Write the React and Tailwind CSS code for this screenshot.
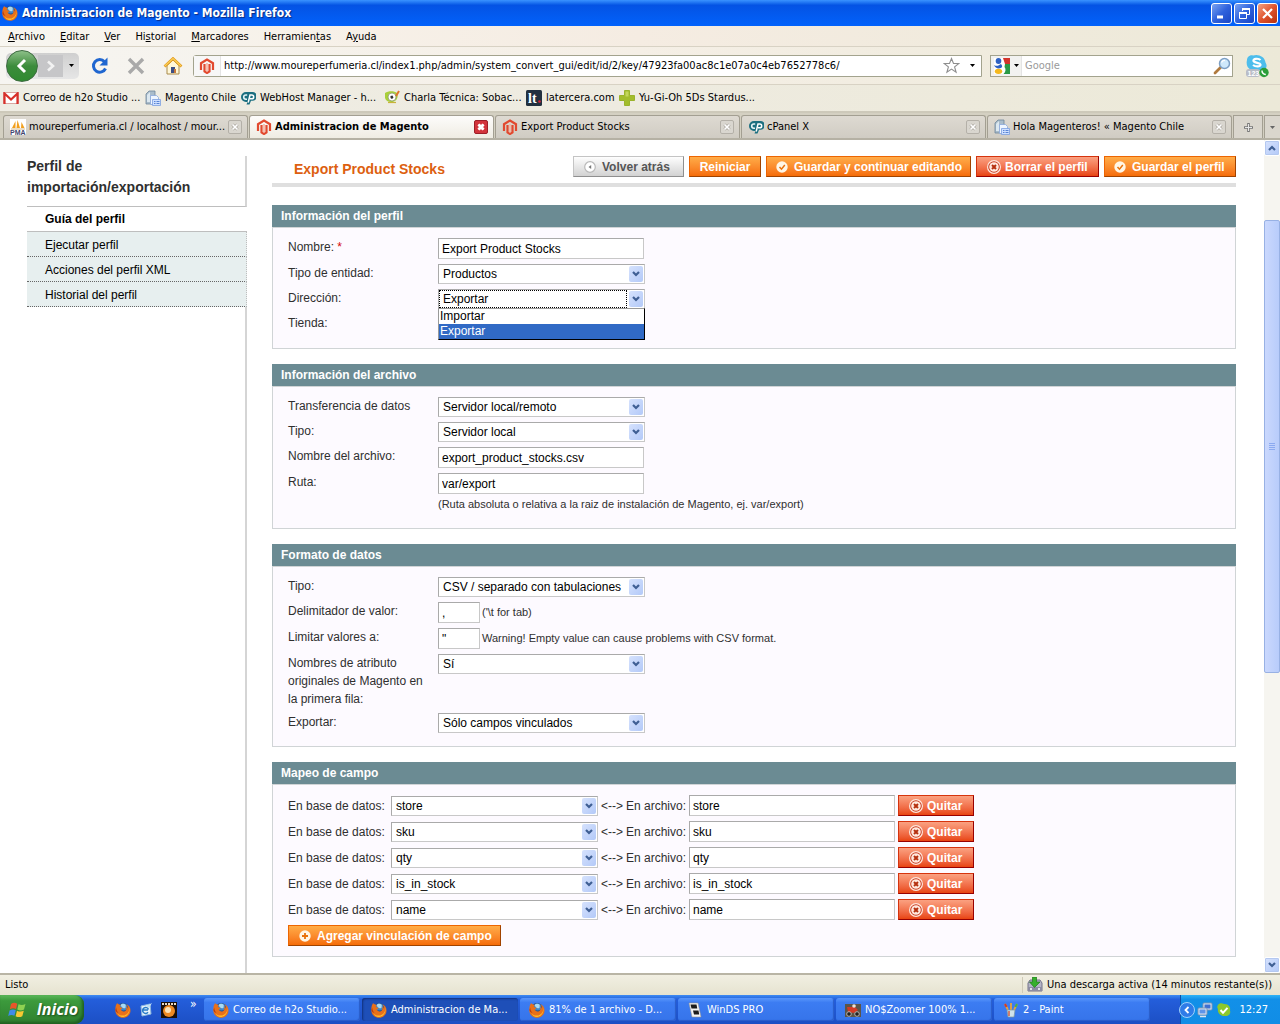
import React from "react";

const UI = "font-['DejaVu_Sans_Condensed','DejaVu_Sans',sans-serif]";

/* ---------- Icons ---------- */

function Firefox({ className = "size-4" }) {
  return (
    <svg viewBox="0 0 16 16" className={className} aria-hidden="true">
      <circle cx="8" cy="7.2" r="6.2" fill="#23508f" />
      <circle cx="8.500" cy="5" r="3.6" fill="#3f86c8" />
      <path d="M5.5 3.2c1.5-1.800 3.800-1.800 5.300-.2-.4 1.300.3 2.300-.6 3.200-1.300.3-2.600-.2-3.300-1z" fill="#a8daf2" />
      <path d="M1 3c.6-.7.9-1.200 1-2 .6.8 1.300 1.300 2.400 1.500C6 2.600 5.600 4 4.800 5c.9.5 1.900.5 2.700.7-.2.9-1.200 1.300-1.800 1.900.8 1.800 2.800 2.300 4.600 1.300 1.400-.9 1.400-3 .6-4.500 1.300.6 1.800 1.500 2 2.400.1-2-.5-3.700-1.800-4.900 3 1.200 4.700 3.800 4.400 7-.3 3.900-3.400 6.800-7.300 6.900C3.700 15.900.3 12.600.3 8.300.3 6.200.5 4.600 1 3z" fill="#e8701a" />
      <path d="M14.200 5c.8 4.500-2 8.500-6.200 8.600-3 .1-5-1.300-6-3.400 1 3.200 3.500 4.900 6.400 4.700 3.900-.3 7.200-4.500 5.800-9.900z" fill="#fcc02c" />
      <path d="M1.200 5.500c0 2 .7 4 2.300 5.200-1.800-.4-2.700-1.500-3-2.800z" fill="#b23410" />
    </svg>
  );
}

function Magento({ className = "size-4" }) {
  return (
    <svg viewBox="0 0 16 16" className={className} fill="none" stroke="#e2492f" aria-hidden="true">
      <path d="M2 12V5.200L8 1.500l6 3.700V12" strokeWidth="2.200" />
      <path d="M5.500 6v7.300L8 15l2.500-1.700V6" strokeWidth="2.200" />
      <path d="M8 5v8.500" stroke="#f7b3a2" strokeWidth="1.600" />
    </svg>
  );
}

function PageStack({ className = "size-4" }) {
  return (
    <svg viewBox="0 0 16 16" className={className} aria-hidden="true">
      <path d="M1 4l3-3h6v13H1z" fill="#a9bccb" stroke="#6f8799" strokeWidth=".8" />
      <path d="M2 5l3-3v10H2z" fill="#dce8f0" />
      <path d="M5.500 5.500h6l2 2v7h-8z" fill="#eef5ff" stroke="#8aa8dc" strokeWidth=".8" />
      <path d="M7.500 9.500h8v6h-8z" fill="#cfe0ff" stroke="#7c9fe0" strokeWidth=".8" />
      <path d="M9 11.500h1.500M11.500 11.500h3M9 13.500h1.500M11.500 13.500h3" stroke="#4d7bd0" strokeWidth=".9" />
    </svg>
  );
}

function CPanel({ className = "size-4" }) {
  return (
    <svg viewBox="0 0 16 16" className={className} aria-hidden="true">
      <path d="M6 2h6.500a3.800 3.800 0 0 1 0 8.800H11l-1.500 3.700H6.500L7.500 12H6A5 5 0 0 1 6 2z" fill="#1c6f80" />
      <path d="M7.200 5H5.800a2 2 0 0 0 0 4.200H7" fill="none" stroke="#e6f4f6" strokeWidth="1.600" />
      <path d="M8.200 12.500L10 5h1.800a1.900 1.900 0 0 1 0 3.800H10" fill="none" stroke="#fff" strokeWidth="1.500" />
    </svg>
  );
}

function Gmail() {
  return (
    <svg viewBox="0 0 16 12" className="h-3 w-4" aria-hidden="true">
      <path d="M.5.500h15v11H.5z" fill="#fff" stroke="#d9a5a0" />
      <path d="M1.500 12V1.500L8 7.500l6.500-6V12" fill="none" stroke="#d8302a" strokeWidth="2.200" />
    </svg>
  );
}

function Charla() {
  return (
    <svg viewBox="0 0 16 16" className="size-4" aria-hidden="true">
      <path d="M1 3c3-2 9-2.500 12 0 1.500 3 .5 7-3 8.500-4 1.500-8 0-9-3.500z" fill="#a9cf3a" />
      <circle cx="8" cy="7" r="4" fill="#fff" stroke="#8c9c6c" strokeWidth=".8" />
      <path d="M6.500 6l2-.5 1 2L8 9 6.500 8z" fill="#333" />
      <path d="M15 1l-3 5" stroke="#e0752a" strokeWidth="2" />
      <path d="M4 12.500h8" stroke="#c9b23a" strokeWidth="1.200" />
    </svg>
  );
}

function LaTercera() {
  return (
    <svg viewBox="0 0 16 16" className="size-4" aria-hidden="true">
      <rect width="16" height="16" rx="1.500" fill="#22303f" />
      <text x="2" y="12.500" fontSize="14" fontWeight="700" fill="#fff" fontFamily="Liberation Serif, serif">lt</text>
      <circle cx="13.500" cy="11.500" r="1.300" fill="#d8203a" />
    </svg>
  );
}

function GreenPlus() {
  return (
    <svg viewBox="0 0 16 16" className="size-4" aria-hidden="true">
      <path d="M5.500.5h5v5h5v5h-5v5h-5v-5h-5v-5h5z" fill="#a3bd2c" stroke="#9ab32c" />
      <path d="M6.500 1.500h3v5h-3z" fill="#c3d65a" />
    </svg>
  );
}

function Pma() {
  return (
    <svg viewBox="0 0 16 16" className="size-4" aria-hidden="true">
      <rect width="16" height="16" fill="#fff" />
      <path d="M2 9L5.500 2v7zM6.500 9l1-8 2.500 8zM11 9l.5-6 3 6z" fill="#f2a01e" />
      <path d="M1 10h14" stroke="#c9a66a" strokeWidth=".8" />
      <text x="0" y="16" fontSize="7" fontWeight="700" fill="#3f456e" fontFamily="Liberation Sans, sans-serif">PMA</text>
    </svg>
  );
}

function Google() {
  return (
    <svg viewBox="0 0 16 16" className="size-4" aria-hidden="true">
      <rect width="16" height="16" fill="#fff" />
      <path d="M9 0h7v6h-5z" fill="#d3352c" />
      <path d="M11 6h5v10H9.500c2.500-2.500 2.500-5 1-7z" fill="#2b9a46" />
      <ellipse cx="4.500" cy="3" rx="2.800" ry="3" fill="#2f62c4" />
      <path d="M0 7c3 2 5 0 7-1 1 1 2 3 0 4-3 1-6 0-7-3z" fill="#2f62c4" />
      <ellipse cx="4.500" cy="13.300" rx="3.700" ry="2.600" fill="#f4b81e" />
    </svg>
  );
}

function Magnifier() {
  return (
    <svg viewBox="0 0 18 18" className="size-[18px]" aria-hidden="true">
      <path d="M2 16l6-6" stroke="#b07a3e" strokeWidth="2.800" strokeLinecap="round" />
      <circle cx="11.500" cy="6.500" r="5" fill="#cfe8fb" stroke="#7d9fc4" strokeWidth="1.500" />
      <path d="M8.500 5.500c.6-1.500 2-2.300 3.500-2" fill="none" stroke="#fff" strokeWidth="1.300" />
    </svg>
  );
}

function Skype() {
  return (
    <svg viewBox="0 0 24 24" className="size-6" aria-hidden="true">
      <path d="M2 6C2 3 5 .5 8 1.500c5-2 12 1 12.500 7 2 3 1 6-1 7.500H6C2 14 1 10 2 6z" fill="#4dbdec" />
      <path d="M15.500 6c-2-2-8-1.500-7 1 .8 2.200 6.500 1.500 7 3.500.3 2.500-5 2.500-7.500.5" fill="none" stroke="#fff" strokeWidth="2.200" />
      <rect x="1" y="15" width="14" height="8" rx="3" fill="#b9bcc6" />
      <text x="2.500" y="21.500" fontSize="7" fill="#fff" fontWeight="700" fontFamily="Liberation Sans, sans-serif">123</text>
      <circle cx="19" cy="18.500" r="4.700" fill="#2c9e3a" />
      <path d="M17 16.500c0 2 1.500 3.800 3.800 4" fill="none" stroke="#fff" strokeWidth="1.500" />
    </svg>
  );
}

function Home() {
  return (
    <svg viewBox="0 0 20 18" className="h-[18px] w-5" aria-hidden="true">
      <path d="M4 8.500V17h12V8.500L10 3z" fill="#fff7d8" stroke="#a98b4a" />
      <path d="M1.500 9.500L10 1.500l8.500 8" fill="none" stroke="#e39a1c" strokeWidth="2.600" />
      <path d="M1.800 9L10 1.500l8 7.500" fill="none" stroke="#fbd15a" strokeWidth="1.100" />
      <path d="M8 16v-6h4v6z" fill="#3c4f86" />
      <path d="M11 12h2v4h-2z" fill="#c7783a" />
    </svg>
  );
}

function DownArrow() {
  return (
    <svg viewBox="0 0 5 3" width="5" height="3" aria-hidden="true">
      <path d="M0 0h5L2.500 3z" fill="currentColor" />
    </svg>
  );
}

function Chevron({ up = false }) {
  return (
    <svg viewBox="0 0 8 6" width="8" height="6" aria-hidden="true">
      <path d={up ? "M1 5l3-3 3 3" : "M1 1l3 3 3-3"} fill="none" stroke="#3f5f94" strokeWidth="2.200" />
    </svg>
  );
}

function CloseMark({ active }) {
  return (
    <svg viewBox="0 0 14 14" className="size-3.5" aria-hidden="true">
      <rect x=".5" y=".5" width="13" height="13" rx="1.500" fill={active ? "#d2343c" : "#d9d6cf"} stroke={active ? "#9c1f28" : "#b4b0a8"} />
      <path d="M4.500 4.500l5 5M9.500 4.500l-5 5" stroke={active ? "#fff" : "#a8a49c"} strokeWidth="3" />
      <path d="M4.500 4.500l5 5M9.500 4.500l-5 5" stroke="#fff" strokeWidth="1.700" />
    </svg>
  );
}

function BadgeIcon({ kind }) {
  if (kind === "x")
    return (
      <svg viewBox="0 0 14 14" className="size-3.5" aria-hidden="true">
        <circle cx="7" cy="7" r="6.400" fill="#c8381a" stroke="#ffe9df" strokeWidth="1.200" />
        <circle cx="7" cy="7" r="4.800" fill="#ffe9df" />
        <path d="M5 5l4 4M9 5L5 9" stroke="#b5300f" strokeWidth="2" />
      </svg>
    );
  if (kind === "back")
    return (
      <svg viewBox="0 0 12 12" className="size-3" aria-hidden="true">
        <circle cx="6" cy="6" r="5.300" fill="#fff" stroke="#b9b9b9" strokeWidth="1.200" />
        <path d="M7.200 4v4L4.500 6z" fill="#777" />
      </svg>
    );
  return (
    <svg viewBox="0 0 12 12" className="size-3" aria-hidden="true">
      <circle cx="6" cy="6" r="5.700" fill="#fff6e6" />
      {kind === "plus" ? (
        <path d="M6 3v6M3 6h6" stroke="#e8720c" strokeWidth="1.800" />
      ) : (
        <path d="M3.500 6l2 2.200L8.800 4" fill="none" stroke="#e8720c" strokeWidth="1.500" />
      )}
    </svg>
  );
}

/* ---------- Window chrome ---------- */

function TitleBar() {
  const base = "flex size-[21px] items-center justify-center rounded-[3px] border border-white";
  const blue = "bg-linear-to-br from-[#7ba2f0] via-[#2f62dd] to-[#1a45c4]";
  return (
    <header className="flex h-[26px] items-center bg-linear-to-b from-[#3a93ff] via-[#0453e4] via-20% to-[#0262fb] px-0.5">
      <Firefox />
      <h1 className="ml-1 flex-1 text-[12px] font-bold text-white [text-shadow:1px_1px_1px_#0a2a80]">
        Administracion de Magento - Mozilla Firefox
      </h1>
      <div className="flex gap-0.5">
        <button aria-label="Minimizar" className={`${base} ${blue}`}>
          <svg viewBox="0 0 13 13" width="13" height="13"><path d="M2 10h6" stroke="#fff" strokeWidth="3" /></svg>
        </button>
        <button aria-label="Restaurar" className={`${base} ${blue}`}>
          <svg viewBox="0 0 13 13" width="13" height="13" fill="none" stroke="#fff">
            <path d="M4.500 4V1.500h7v6H9" /><path d="M4 2h8" strokeWidth="2" />
            <path d="M1.500 5.500h7v6h-7z" /><path d="M1 6h8" strokeWidth="2" />
          </svg>
        </button>
        <button aria-label="Cerrar" className={`${base} bg-linear-to-br from-[#f0a080] via-[#e0532c] to-[#b8300c]`}>
          <svg viewBox="0 0 13 13" width="13" height="13"><path d="M2 2l9 9M11 2l-9 9" stroke="#fff" strokeWidth="2.200" /></svg>
        </button>
      </div>
    </header>
  );
}

const MENUS = [
  ["", "A", "rchivo"],
  ["", "E", "ditar"],
  ["", "V", "er"],
  ["Hi", "s", "torial"],
  ["", "M", "arcadores"],
  ["Herramien", "t", "as"],
  ["A", "y", "uda"],
];

function MenuBar() {
  return (
    <nav className="flex h-[21px] items-center gap-[15px] border-b border-[#d8d2c4] bg-linear-to-r from-[#f8f6f0] via-[#f5ece2] to-[#ece9d8] pt-0.5 pl-2">
      {MENUS.map(([a, b, c]) => (
        <button key={a + b + c}>
          {a}
          <span className="underline">{b}</span>
          {c}
        </button>
      ))}
    </nav>
  );
}

function NavBar() {
  return (
    <div className="flex h-[38px] items-center border-b border-[#d8d2c4] bg-linear-to-r from-[#f6f5f1] via-[#f5efe6] to-[#ece9d8] pr-2 pl-1.5">
      <div className="flex h-[26px] w-[73px] items-center rounded-[5px] bg-linear-to-b from-[#cfcfcf] to-[#e6e6e6]">
        <button aria-label="Atrás" className="flex size-8 shrink-0 items-center justify-center rounded-full border border-[#3d6b40] bg-linear-to-b from-[#8cc088] via-[#3c8c3c] to-[#2f8a30]">
          <svg viewBox="0 0 14 16" width="14" height="16"><path d="M10 2L4 8l6 6" fill="none" stroke="#fff" strokeWidth="3" /></svg>
        </button>
        <button aria-label="Adelante" className="flex h-[22px] w-[25px] items-center justify-center bg-[#c6c6c8]">
          <svg viewBox="0 0 10 12" width="10" height="12"><path d="M2 1.500L7 6l-5 4.500" fill="none" stroke="#f2f2f2" strokeWidth="2.600" /></svg>
        </button>
        <button aria-label="Historial reciente" className="flex flex-1 items-center justify-center">
          <DownArrow />
        </button>
      </div>
      <button aria-label="Recargar" className="ml-3">
        <svg viewBox="0 0 18 18" width="18" height="18">
          <path d="M14.500 11.500a6.300 6.300 0 1 1-1-6.800" fill="none" stroke="#1f66d0" strokeWidth="3" />
          <path d="M16.500.500v8h-8z" fill="#1f66d0" />
        </svg>
      </button>
      <button aria-label="Detener" className="ml-[18px]">
        <svg viewBox="0 0 18 18" width="18" height="18"><path d="M2 2l14 14M16 2L2 16" stroke="#a9a9a9" strokeWidth="3.400" /></svg>
      </button>
      <button aria-label="Inicio" className="ml-[18px]"><Home /></button>
      <div className="ml-2.5 flex h-[22px] flex-1 items-center rounded-l-[3px] border border-[#a3a38e] bg-white">
        <span className="flex h-full w-[27px] items-center justify-center border-r border-[#e4e4e4] bg-[#f7f7f7]"><Magento /></span>
        <input
          aria-label="Dirección"
          className="min-w-0 flex-1 px-[3px] outline-none"
          defaultValue="http://www.moureperfumeria.cl/index1.php/admin/system_convert_gui/edit/id/2/key/47923fa00ac8c1e07a0c4eb7652778c6/"
        />
        <button aria-label="Añadir a marcadores">
          <svg viewBox="0 0 17 17" width="17" height="17"><path d="M8.500 1.500l2 5h5.300l-4.200 3.400 1.500 5.400-4.600-3.200-4.600 3.200 1.500-5.400L1.200 6.500h5.300z" fill="#fff" stroke="#8e8e8e" strokeWidth="1.100" /></svg>
        </button>
        <button aria-label="Direcciones recientes" className="flex w-[21px] justify-center pl-1"><DownArrow /></button>
      </div>
      <div className="ml-2 flex h-[22px] w-[243px] items-center border border-[#a3a38e] bg-white">
        <button aria-label="Motor de búsqueda" className="flex h-full w-[31px] items-center gap-1 border-r border-[#e4e4e4] bg-[#f2f2f0] pl-[3px]">
          <Google /><DownArrow />
        </button>
        <input aria-label="Buscar" placeholder="Google" className="min-w-0 flex-1 px-[3px] outline-none placeholder:text-[#9a9a9a]" />
        <button aria-label="Ir" className="mr-px"><Magnifier /></button>
      </div>
      <button aria-label="Skype" className="ml-3 mr-[3px]"><Skype /></button>
    </div>
  );
}

const BOOKMARKS = [
  { icon: <Gmail />, text: "Correo de h2o Studio ...", w: "w-[142px]" },
  { icon: <PageStack />, text: "Magento Chile", w: "w-[95px]" },
  { icon: <CPanel />, text: "WebHost Manager - h...", w: "w-[144px]" },
  { icon: <Charla />, text: "Charla Técnica: Sobac...", w: "w-[142px]" },
  { icon: <LaTercera />, text: "latercera.com", w: "w-[93px]" },
  { icon: <GreenPlus />, text: "Yu-Gi-Oh 5Ds Stardus...", w: "w-[142px]" },
];

function BookmarksBar() {
  return (
    <nav className="flex h-[26px] items-center bg-linear-to-r from-[#efede4] via-[#eeebe0] to-[#ece9d8] pl-[3px]">
      {BOOKMARKS.map((b) => (
        <a key={b.text} href="#" className={`flex items-center gap-1 whitespace-nowrap ${b.w}`}>
          <span className="shrink-0">{b.icon}</span>
          {b.text}
        </a>
      ))}
    </nav>
  );
}

const TABS = [
  { icon: <Pma />, text: "moureperfumeria.cl / localhost / mour..." },
  { icon: <Magento />, text: "Administracion de Magento", active: true },
  { icon: <Magento />, text: "Export Product Stocks" },
  { icon: <CPanel />, text: "cPanel X" },
  { icon: <PageStack />, text: "Hola Magenteros! « Magento Chile" },
];

function TabStrip() {
  return (
    <div className="flex h-[29px] items-stretch border-t-2 border-b-2 border-t-[#cdc9ba] border-b-[#b5b1a4] bg-[#d4d0c2] pt-0.5 pl-[3px]">
      {TABS.map((t) => (
        <div
          key={t.text}
          className={`mr-px flex min-w-0 flex-1 items-center rounded-t-[3px] border border-b-0 border-[#a39f92] pr-[5px] pl-1.5 ${
            t.active ? "bg-linear-to-b from-[#fdfcfb] to-[#efece3] font-bold" : "bg-linear-to-b from-[#dedad2] to-[#d0ccc3]"
          }`}
        >
          <button className="flex min-w-0 flex-1 items-center gap-[3px] whitespace-nowrap">
            <span className="shrink-0">{t.icon}</span>
            <span>{t.text}</span>
          </button>
          <button aria-label="Cerrar pestaña"><CloseMark active={t.active} /></button>
        </div>
      ))}
      <button aria-label="Nueva pestaña" className="mr-px flex w-[30px] items-center justify-center border border-b-0 border-[#a39f92] bg-[#dad6cd]">
        <svg viewBox="0 0 9 9" width="9" height="9"><path d="M4.500 0v9M0 4.500h9" stroke="#777" strokeWidth="2.600" /><path d="M4.500 1v7M1 4.500h7" stroke="#e6e6e6" strokeWidth="1" /></svg>
      </button>
      <button aria-label="Lista de pestañas" className="flex w-4 items-center justify-center border border-r-0 border-b-0 border-[#a39f92] bg-[#dad6cd] text-[#666]"><DownArrow /></button>
    </div>
  );
}

/* ---------- Magento page ---------- */

const BTN = "flex h-[21px] items-center border text-[12px] leading-none font-bold whitespace-nowrap";
const ORANGE = "gap-1.5 border-[#ed6502] border-r-[#a04300] border-b-[#a04300] bg-linear-to-b from-[#ffac47] to-[#f56c06] text-white";
const RED = "gap-1 border-[#d6340e] border-r-[#990000] border-b-[#990000] bg-linear-to-b from-[#faa181] to-[#e8430c] text-white";
const GREY = "gap-1.5 border-[#c4c4c4] border-r-[#8f8f8f] border-b-[#8f8f8f] bg-linear-to-b from-[#fefefe] to-[#d2d2d2] text-[#555]";

function Sidebar() {
  return (
    <aside className="mt-4 ml-[27px] flex w-[220px] shrink-0 flex-col">
      <h2 className="h-[51px] border-r-2 border-b border-r-[#d5d5d5] border-b-[#bebebe] text-[14px] leading-[21px] font-bold text-[#2f3030]">
        Perfil de importación/exportación
      </h2>
      <ul className="text-[12px] leading-6 text-black">
        <li className="border-b border-[#bebebe] pl-[18px] font-bold"><a href="#">Guía del perfil</a></li>
        {["Ejecutar perfil", "Acciones del perfil XML", "Historial del perfil"].map((t) => (
          <li key={t} className="border-r border-b border-dotted border-r-[#bebebe] border-b-[#666] bg-[#e7efef] pt-0.5 pl-[18px] leading-[22px]">
            <a href="#">{t}</a>
          </li>
        ))}
      </ul>
      <div className="flex-1 border-r-2 border-[#d5d5d5]" />
    </aside>
  );
}

function PageHeader() {
  return (
    <div className="flex h-[31px] items-start gap-[5px] border-b-4 border-[#dfdfdf]">
      <h3 className="flex-1 pt-[3px] pl-[22px] text-[14px] leading-[21px] font-bold text-[#dd5f10]">Export Product Stocks</h3>
      <button className={`${BTN} ${GREY} w-[111px] pl-2.5`}><BadgeIcon kind="back" />Volver atrás</button>
      <button className={`${BTN} ${ORANGE} w-[72px] justify-center`}>Reiniciar</button>
      <button className={`${BTN} ${ORANGE} w-[205px] pl-[9px]`}><BadgeIcon kind="check" />Guardar y continuar editando</button>
      <button className={`${BTN} ${RED} w-[123px] pl-2.5`}><BadgeIcon kind="x" />Borrar el perfil</button>
      <button className={`${BTN} ${ORANGE} w-[132px] pl-[9px]`}><BadgeIcon kind="check" />Guardar el perfil</button>
    </div>
  );
}

function Section({ title, className = "pb-[13px]", children }) {
  return (
    <section>
      <h4 className="h-[22px] bg-[#6b8b93] pl-[9px] text-[12px] leading-[22px] font-bold text-white">{title}</h4>
      <div className={`flex flex-col gap-[5px] border border-[#d0d4d6] bg-[#fdfaff] px-[15px] pt-2.5 ${className}`}>{children}</div>
    </section>
  );
}

function Row({ id, label, required, note, children }) {
  return (
    <div className="flex items-start">
      <label htmlFor={id} className="w-[150px] shrink-0 pr-2 leading-[18px]">
        {label}
        {required && <span className="text-[#d40707]"> *</span>}
      </label>
      {children}
      {note && <span className="ml-0.5 text-[11px] leading-5">{note}</span>}
    </div>
  );
}

const BOX = "border border-[#c8c8c8] border-t-[#aaa] border-l-[#aaa] bg-white text-[12px] text-black";

function TextBox({ id, value, w = "w-[206px]" }) {
  return <input id={id} defaultValue={value} className={`block h-[21px] px-[3px] outline-none ${BOX} ${w}`} />;
}

function Select({ id, value, options, open }) {
  return (
    <div className="relative w-[207px] shrink-0">
      <select id={id} defaultValue={value} className={`block h-5 w-full appearance-none pl-1 outline-none ${BOX}`}>
        {(options || [value]).map((o) => (
          <option key={o}>{o}</option>
        ))}
      </select>
      {open && <span className="pointer-events-none absolute inset-y-px left-px w-[188px] border border-dotted border-black" />}
      <span className="pointer-events-none absolute top-0.5 right-0.5 flex h-4 w-[14px] items-center justify-center rounded-[2px] bg-linear-to-br from-[#d6e2fd] to-[#b3c9f8]">
        <Chevron />
      </span>
      {open && (
        <ul className="absolute top-full left-0 z-10 -mt-px w-full border border-[#999] border-r-black border-b-black bg-white text-black">
          {options.map((o) => (
            <li key={o} className={`h-[15px] pl-px leading-[15px] ${o === value ? "bg-[#316ac5] text-white" : ""}`}>{o}</li>
          ))}
        </ul>
      )}
    </div>
  );
}

function MappingRow({ field }) {
  return (
    <div className="flex items-center gap-[3px]">
      <label htmlFor={`db-${field}`} className="w-[100px] whitespace-nowrap">En base de datos:</label>
      <Select id={`db-${field}`} value={field} />
      <span className="w-[22px]">&lt;--&gt;</span>
      <label htmlFor={`file-${field}`} className="w-[60px] whitespace-nowrap">En archivo:</label>
      <TextBox id={`file-${field}`} value={field} />
      <button className={`${BTN} ${RED} w-[76px] pl-2.5`}><BadgeIcon kind="x" />Quitar</button>
    </div>
  );
}

function ScrollBar() {
  const end = "flex h-4 items-center justify-center rounded-[2px] border border-white bg-linear-to-br from-[#d6e2fd] to-[#b3c9f8] shadow-[0_0_0_1px_#b4c8f0_inset]";
  return (
    <div className="flex w-4 shrink-0 flex-col bg-[#f6f5f0]" aria-hidden="true">
      <div className={end}><Chevron up /></div>
      <div className="grow-[64] basis-0" />
      <div className="flex grow-[451] basis-0 flex-col items-center justify-center gap-px rounded-[2px] border border-[#98b1e4] bg-linear-to-r from-[#cad8fd] to-[#b8ccfb]">
        {[0, 1, 2, 3].map((i) => (
          <span key={i} className="h-px w-1.5 bg-[#8caaf0]" />
        ))}
      </div>
      <div className="grow-[284] basis-0" />
      <div className={end}><Chevron /></div>
    </div>
  );
}

function Page() {
  return (
    <main className="flex flex-1 bg-white font-['Liberation_Sans',Arial,sans-serif] text-[12px] text-[#2f2f2f]">
      <Sidebar />
      <div className="mt-4 mr-7 ml-[25px] min-w-0 flex-1">
        <PageHeader />
        <form className="mt-[18px] flex flex-col gap-[15px]" onSubmit={(e) => e.preventDefault()}>
          <Section title="Información del perfil">
            <Row id="name" label="Nombre:" required><TextBox id="name" value="Export Product Stocks" /></Row>
            <Row id="entity" label="Tipo de entidad:"><Select id="entity" value="Productos" /></Row>
            <Row id="direction" label="Dirección:"><Select id="direction" value="Exportar" options={["Importar", "Exportar"]} open /></Row>
            <div className="h-[21px] leading-[18px]">Tienda:</div>
          </Section>
          <Section title="Información del archivo" className="pb-3.5">
            <Row id="transfer" label="Transferencia de datos"><Select id="transfer" value="Servidor local/remoto" /></Row>
            <Row id="ftype" label="Tipo:"><Select id="ftype" value="Servidor local" /></Row>
            <Row id="fname" label="Nombre del archivo:"><TextBox id="fname" value="export_product_stocks.csv" /></Row>
            <Row id="path" label="Ruta:">
              <div>
                <TextBox id="path" value="var/export" />
                <p className="text-[11px] leading-5">(Ruta absoluta o relativa a la raiz de instalación de Magento, ej. var/export)</p>
              </div>
            </Row>
          </Section>
          <Section title="Formato de datos">
            <Row id="dtype" label="Tipo:"><Select id="dtype" value="CSV / separado con tabulaciones" /></Row>
            <Row id="delim" label="Delimitador de valor:" note="('\t for tab)"><TextBox id="delim" value="," w="w-[42px]" /></Row>
            <Row id="enclose" label="Limitar valores a:" note="Warning! Empty value can cause problems with CSV format."><TextBox id="enclose" value={'"'} w="w-[42px]" /></Row>
            <Row id="orig" label="Nombres de atributo originales de Magento en la primera fila:"><Select id="orig" value="Sí" /></Row>
            <Row id="export" label="Exportar:"><Select id="export" value="Sólo campos vinculados" /></Row>
          </Section>
          <Section title="Mapeo de campo" className="pb-2.5">
            {["store", "sku", "qty", "is_in_stock", "name"].map((f) => (
              <MappingRow key={f} field={f} />
            ))}
            <button className={`${BTN} ${ORANGE} w-[213px] pl-2.5`}><BadgeIcon kind="plus" />Agregar vinculación de campo</button>
          </Section>
        </form>
      </div>
      <ScrollBar />
    </main>
  );
}

/* ---------- Status bar and taskbar ---------- */

function StatusBar() {
  return (
    <footer className="flex h-[22px] items-center justify-between border-t-2 border-[#b9b5a5] bg-linear-to-b from-[#f1efe2] to-[#e6e3d0] pr-2 pl-[5px]">
      <span>Listo</span>
      <span className="flex items-center gap-1 border-l border-[#cfcbb8] pl-1">
        <svg viewBox="0 0 16 16" className="size-4" aria-hidden="true">
          <path d="M1 6l2-3h10l2 3v8H1z" fill="#b4b4c6" stroke="#72728a" />
          <path d="M1 10h14v4H1z" fill="#8c8ca2" />
          <path d="M3 12h2M11 12h2" stroke="#fff" strokeWidth="1.500" />
          <path d="M5.500 0h4v5H13L7.500 10.500 2.500 5h3z" fill="#36b02c" stroke="#1e7a1a" strokeWidth=".7" />
        </svg>
        Una descarga activa (14 minutos restante(s))
      </span>
    </footer>
  );
}

function WinDs() {
  return (
    <svg viewBox="0 0 16 16" className="size-4" aria-hidden="true">
      <path d="M2 1h9l3 14H5z" fill="#f4f4f4" stroke="#999" strokeWidth=".6" />
      <path d="M3.500 2.500h6l.8 4H4.500zM6 8.500h5.500l.7 4H7z" fill="#1b1b1b" />
    </svg>
  );
}

function Moto() {
  return (
    <svg viewBox="0 0 16 16" className="size-4" aria-hidden="true">
      <rect y="2" width="16" height="13" fill="#5b5448" />
      <path d="M2 5h8l3 3-4 3-6-1z" fill="#d23a26" />
      <circle cx="4" cy="12" r="2.300" fill="#222" stroke="#ccc" strokeWidth=".8" />
      <circle cx="12" cy="12" r="2.300" fill="#222" stroke="#ccc" strokeWidth=".8" />
      <circle cx="9" cy="4" r="1.800" fill="#efe2d2" />
    </svg>
  );
}

function Paint() {
  return (
    <svg viewBox="0 0 16 16" className="size-4" aria-hidden="true">
      <path d="M5 8L2 2M8 8V1M11 8l3-6" stroke="#e8a43c" strokeWidth="1.800" />
      <path d="M2 2l1.500 3" stroke="#d23a26" strokeWidth="2" />
      <path d="M14 2l-1.500 3" stroke="#43b04a" strokeWidth="2" />
      <path d="M4 8h8l-1 7H5z" fill="#cfe3ea" stroke="#7d96a0" strokeWidth=".7" />
      <path d="M6 9v5" stroke="#d2553a" strokeWidth="1.400" />
    </svg>
  );
}

const TASKS = [
  { icon: <Firefox />, text: "Correo de h2o Studio..." },
  { icon: <Firefox />, text: "Administracion de Ma...", active: true },
  { icon: <Firefox />, text: "81% de 1 archivo - D..." },
  { icon: <WinDs />, text: "WinDS PRO" },
  { icon: <Moto />, text: "NO$Zoomer 100% 1..." },
  { icon: <Paint />, text: "2 - Paint" },
];

function TaskBar() {
  return (
    <footer className="flex h-[29px] items-stretch bg-linear-to-b from-[#3f8cf3] via-[#245edb] via-15% to-[#1c4fc4] text-white">
      <button className="flex w-[84px] items-center justify-between rounded-r-[9px] bg-linear-to-b from-[#5cb85a] via-[#3c9a3c] via-20% to-[#2f8030] pr-1.5 pl-2 shadow-[inset_-2px_-2px_3px_#1f5f20]">
        <svg viewBox="0 0 20 20" className="size-5" aria-hidden="true">
          <path d="M3 4c2-1.500 4-1.500 6.300-.3L8 9C6 8 4 8 1.800 9.300z" fill="#e8562a" />
          <path d="M10.500 4.200c2.500 1.200 4.500 1 7-.2L16 9.500c-2.200 1.200-4.500 1.200-6.700 0z" fill="#8fd252" />
          <path d="M1.500 10.500c2.300-1.300 4.200-1.300 6.300-.3l-1.400 5.500c-2-1-4-1-6.200.2z" fill="#3f8be8" />
          <path d="M9 10.700c2.400 1.200 4.500 1 6.800 0l-1.500 5.500c-2.300 1.200-4.500 1.100-6.700 0z" fill="#f8c832" />
        </svg>
        <span className="pb-0.5 font-['Open_Sans',sans-serif] text-[16px] font-bold italic [text-shadow:1px_1px_2px_#1a4a1a]">Inicio</span>
      </button>
      <div className="flex w-[120px] items-center gap-[7px] pl-[31px]">
        <button aria-label="Firefox" className="shrink-0"><Firefox /></button>
        <button aria-label="Escritorio" className="shrink-0">
          <svg viewBox="0 0 16 16" className="size-4">
            <path d="M3 4l9-2 1 10-9 2z" fill="#e8f3fb" stroke="#8db8e0" />
            <path d="M10.500 7.500a3 3 0 1 0-.5 2.800M5 8h5" fill="none" stroke="#2a7cc8" strokeWidth="1.500" />
            <path d="M8 4l6-3-3 5z" fill="#bfe0f4" />
          </svg>
        </button>
        <button aria-label="Reproductor" className="shrink-0">
          <svg viewBox="0 0 16 16" className="size-4">
            <rect width="16" height="16" fill="#1c0f08" />
            <path d="M1 2h14" stroke="#e8dccb" strokeWidth="2" strokeDasharray="2 1" />
            <circle cx="8" cy="9" r="6" fill="#ee8a24" />
            <circle cx="7" cy="8" r="3" fill="#fde3b8" />
          </svg>
        </button>
        <span className="mb-3 ml-1.5 text-[12px]">»</span>
      </div>
      <div className="flex min-w-0 flex-1 gap-0.5 py-[3px] pr-[30px]">
        {TASKS.map((t) => (
          <button
            key={t.text}
            className={`flex min-w-0 flex-1 items-center gap-1 overflow-hidden rounded-[3px] pl-[9px] whitespace-nowrap ${
              t.active ? "bg-[#1e4fb8] shadow-[inset_1px_1px_2px_#12317c]" : "bg-linear-to-b from-[#5a97fb] via-[#3c7cf2] via-20% to-[#3674ea] shadow-[inset_-1px_-1px_1px_#2a5cc8]"
            }`}
          >
            <span className="shrink-0">{t.icon}</span>
            {t.text}
          </button>
        ))}
      </div>
      <div className="flex w-[100px] items-center border-l border-[#0e4fa8] bg-linear-to-b from-[#2fb4f6] via-[#1290e8] via-15% to-[#118de6] pr-3">
        <button aria-label="Mostrar iconos ocultos" className="-ml-0.5 flex size-4 items-center justify-center rounded-full border border-[#9fd0fa] bg-[#2f7ce8]">
          <svg viewBox="0 0 8 8" width="8" height="8"><path d="M5.500 1L2.500 4l3 3" fill="none" stroke="#fff" strokeWidth="1.800" /></svg>
        </button>
        <svg viewBox="0 0 16 16" className="ml-0.5 size-4" aria-hidden="true">
          <rect x="6" y="1" width="9" height="7" rx="1" fill="#dbe6f2" stroke="#7b93b8" />
          <rect x="7.500" y="2.500" width="6" height="4" fill="#3f6fd0" />
          <rect x="1" y="6" width="9" height="7" rx="1" fill="#dbe6f2" stroke="#7b93b8" />
          <rect x="2.500" y="7.500" width="6" height="4" fill="#5f94e8" />
          <path d="M3 14.500h6" stroke="#dbe6f2" strokeWidth="1.500" />
        </svg>
        <svg viewBox="0 0 16 16" className="ml-[3px] size-4" aria-hidden="true">
          <path d="M2 3c1-2 4-2 6-1 4-.5 7 3 6 6.500 1 3-1 5.500-4 5.500-5 .8-9-3-8-7C1 6 1 4 2 3z" fill="#8cc82c" />
          <path d="M4.500 8l2.500 2.800 4.500-5" fill="none" stroke="#fff" strokeWidth="2" />
        </svg>
        <span className="ml-auto">12:27</span>
      </div>
    </footer>
  );
}

export default function App() {
  return (
    <div className={`flex min-h-screen flex-col bg-white text-[11px] leading-4 text-black ${UI}`}>
      <TitleBar />
      <MenuBar />
      <NavBar />
      <BookmarksBar />
      <TabStrip />
      <Page />
      <StatusBar />
      <TaskBar />
    </div>
  );
}
